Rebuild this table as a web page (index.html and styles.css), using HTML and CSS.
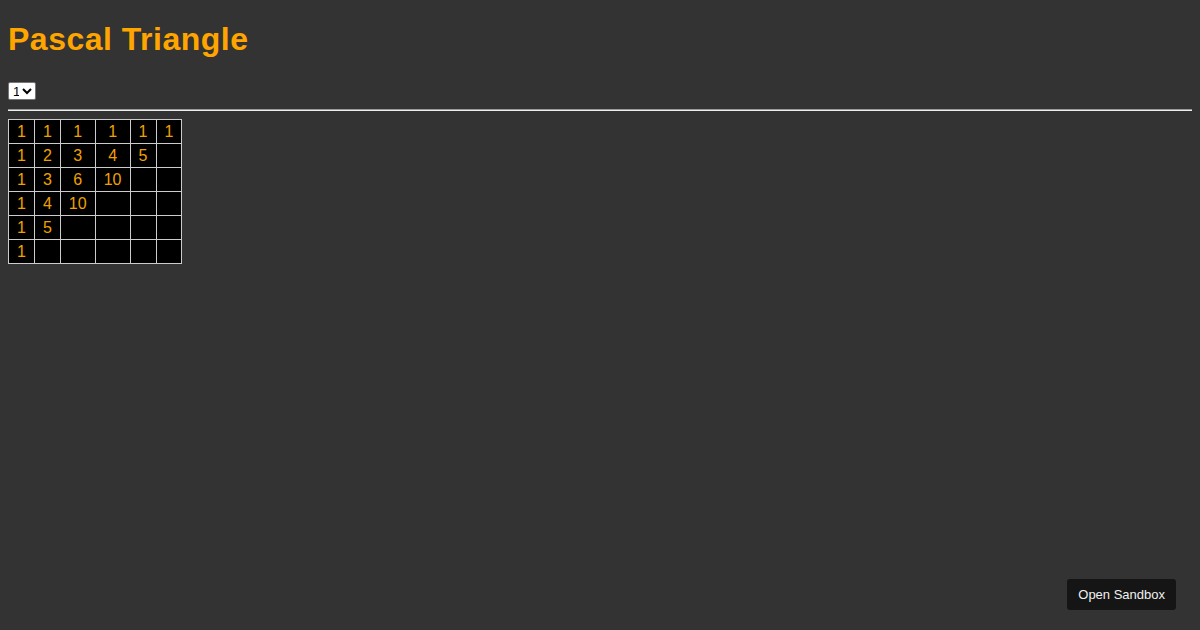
FILE: index.html
```html
<!DOCTYPE html>
<html lang="en">
<head>
    <meta charset="UTF-8">
    <title>Pascal Triangle</title>
    <link rel="stylesheet" href="styles.css">
</head>
<body>
    <h1 class="title">Pascal Triangle</h1>
    <div class="controls">
        <select id="rows">
            <option value="1">1</option>
            <option value="2">2</option>
            <option value="3">3</option>
        </select>
    </div>
    <hr>
    <table class="triangle">
        <tr><td>1</td><td>1</td><td>1</td><td>1</td><td>1</td><td>1</td></tr>
        <tr><td>1</td><td>2</td><td>3</td><td>4</td><td>5</td><td></td></tr>
        <tr><td>1</td><td>3</td><td>6</td><td>10</td><td></td><td></td></tr>
        <tr><td>1</td><td>4</td><td>10</td><td></td><td></td><td></td></tr>
        <tr><td>1</td><td>5</td><td></td><td></td><td></td><td></td></tr>
        <tr><td>1</td><td></td><td></td><td></td><td></td><td></td></tr>
    </table>
    <a class="sandbox" href="#">Open Sandbox</a>
</body>
</html>
```

FILE: styles.css
```css
body {
    font-family: "Liberation Sans", Arial, sans-serif;
    margin: 8px;
    background-color: #333333;
    color: orange;
}
.title {
    font-size: 32px;
    letter-spacing: 0.5px;
    margin: 13px 0 22px;
    color: orange;
}
.controls {
    height: 22px;
}
select {
    font-family: "Liberation Sans", Arial, sans-serif;
    font-size: 13px;
    color: black;
    background: white;
    border: 1px solid #767676;
    border-radius: 2px;
    height: 18px;
    width: 28px;
    padding: 0;
    margin-top: 2px;
}
hr {
    margin: 7px 0 8px;
    border: none;
    border-top: 1px solid #9a9a9a;
    border-bottom: 1px solid #eeeeee;
}
.triangle {
    border-collapse: collapse;
    background-color: black;
}
.triangle td {
    border: 1px solid #cccccc;
    padding: 3px 8px;
    line-height: 17px;
    font-size: 16px;
    text-align: center;
    color: #f0a000;
}
.triangle td:nth-child(4) {
    width: 18px;
    padding: 3px 8px;
}
.sandbox {
    position: fixed;
    right: 24px;
    bottom: 20px;
    background-color: #151515;
    color: #f0f0f0;
    font-family: "Liberation Sans", Arial, sans-serif;
    font-size: 13px;
    line-height: 15px;
    text-decoration: none;
    padding: 8px 11px;
    border-radius: 3px;
}
```
